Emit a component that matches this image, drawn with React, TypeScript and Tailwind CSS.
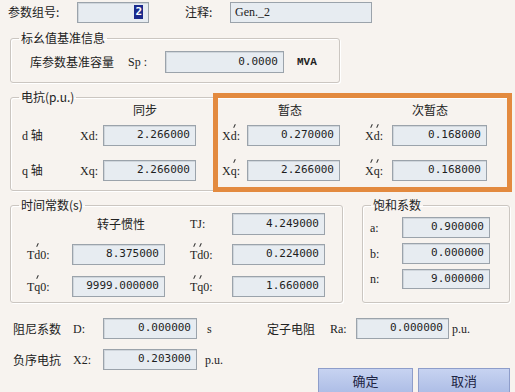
import type { ReactNode } from "react"

const cjk = "font-['Noto_Sans_CJK_SC',sans-serif]"
const lat = "font-['Liberation_Serif',serif] text-[12px]"
const mono = "font-['Liberation_Mono',monospace] text-[11px]"
const num = "font-['DejaVu_Sans_Mono',monospace] text-[11px]"

function Box({ className, children }: { className: string; children: ReactNode }) {
  return (
    <div
      className={`${className} flex items-center justify-end pr-[5px] bg-[#e7ecf1] border border-[#9ba3ab] shadow-[inset_1px_1px_0_#d0d6dc] ${num} text-[#1e1e1e]`}
    >
      {children}
    </div>
  )
}

function Group({ title, className, children }: { title: string; className: string; children: ReactNode }) {
  return (
    <fieldset className={`${className} border border-[#cbc6c1] rounded-[3px] shadow-[inset_1px_1px_0_#fff,1px_1px_0_#fff]`}>
      <legend className="ml-[8px] px-[2px] text-[12px] leading-[16px] text-[#222]">{title}</legend>
      {children}
    </fieldset>
  )
}

// letter with small prime strokes drawn above it
function Pr({ ch, n }: { ch: string; n: number }) {
  return (
    <span className="relative inline-block">
      {ch}
      <span className="absolute left-[3px] -top-[3px] w-[1px] h-[4px] bg-[#333] rotate-[25deg]" />
      {n === 2 && <span className="absolute -left-[3px] -top-[3px] w-[1px] h-[4px] bg-[#333] rotate-[25deg]" />}
    </span>
  )
}

export default function App() {
  return (
    <div className={`relative w-[515px] h-[392px] overflow-hidden bg-[#f7f3ef] text-[12px] text-[#222] ${cjk}`}>
      {/* top row */}
      <div className="flex items-center h-[24px] pl-[8px]">
        <span className="w-[69px]">参数组号:</span>
        <Box className="w-[72px] h-[21px]">
          <span className="bg-[#1b2a8c] text-white font-bold px-[1px] leading-[14px]">2</span>
        </Box>
        <span className="ml-[36px] w-[45px]">注释:</span>
        <div className={`w-[142px] h-[21px] flex items-center pl-[4px] bg-[#e7ecf1] border border-[#9ba3ab] ${lat}`}>
          Gen._2
        </div>
      </div>

      <Group title="标幺值基准信息" className="mt-[6px] ml-[10px] w-[330px] h-[53px]">
        <div className="flex items-center h-[22px] mt-[5px] pl-[19px]">
          <span className="w-[98px]">库参数基准容量</span>
          <span className={`w-[37px] ${lat}`}>Sp :</span>
          <Box className="w-[119px] h-[22px]">0.0000</Box>
          <span className={`ml-[13px] font-bold ${mono}`}>MVA</span>
        </div>
      </Group>

      <Group title="电抗(p.u.)" className="mt-[6px] ml-[10px] w-[500px] h-[102px]">
        <div className="flex h-[14px] leading-[14px] -mt-[2px]">
          <span className="ml-[122px] w-[26px]">同步</span>
          <span className="ml-[119px] w-[26px]">暂态</span>
          <span className="ml-[108px]">次暂态</span>
        </div>
        <div className="flex items-center h-[21px] mt-[8px] pl-[11px]">
          <span className="w-[58px]"><span className={lat}>d</span> 轴</span>
          <span className={`w-[23px] ${lat}`}>Xd:</span>
          <Box className="w-[93px] h-[21px]">2.266000</Box>
          <span className={`ml-[26px] w-[25px] ${lat}`}>X<Pr ch="d" n={1} />:</span>
          <Box className="w-[93px] h-[21px]">0.270000</Box>
          <span className={`ml-[25px] w-[27px] ${lat}`}>X<Pr ch="d" n={2} />:</span>
          <Box className="w-[95px] h-[21px]">0.168000</Box>
        </div>
        <div className="flex items-center h-[21px] mt-[14px] pl-[11px]">
          <span className="w-[58px]"><span className={lat}>q</span> 轴</span>
          <span className={`w-[23px] ${lat}`}>Xq:</span>
          <Box className="w-[93px] h-[21px]">2.266000</Box>
          <span className={`ml-[26px] w-[25px] ${lat}`}>X<Pr ch="q" n={1} />:</span>
          <Box className="w-[93px] h-[21px]">2.266000</Box>
          <span className={`ml-[25px] w-[27px] ${lat}`}>X<Pr ch="q" n={2} />:</span>
          <Box className="w-[95px] h-[21px]">0.168000</Box>
        </div>
      </Group>

      <div className="flex mt-[6px] ml-[10px]">
        <Group title="时间常数(s)" className="w-[333px] h-[106px]">
          <div className="flex items-center h-[22px] pl-[86px]">
            <span className="w-[93px]">转子惯性</span>
            <span className={`w-[42px] ${lat}`}>TJ:</span>
            <Box className="w-[93px] h-[22px]">4.249000</Box>
          </div>
          <div className="flex items-center h-[21px] mt-[9px] pl-[16px]">
            <span className={`w-[45px] ${lat}`}>T<Pr ch="d" n={1} />0:</span>
            <Box className="w-[93px] h-[21px]">8.375000</Box>
            <span className={`ml-[25px] w-[42px] ${lat}`}>T<Pr ch="d" n={2} />0:</span>
            <Box className="w-[93px] h-[21px]">0.224000</Box>
          </div>
          <div className="flex items-center h-[21px] mt-[11px] pl-[16px]">
            <span className={`w-[45px] ${lat}`}>T<Pr ch="q" n={1} />0:</span>
            <Box className="w-[93px] h-[21px]">9999.000000</Box>
            <span className={`ml-[25px] w-[42px] ${lat}`}>T<Pr ch="q" n={2} />0:</span>
            <Box className="w-[93px] h-[21px]">1.660000</Box>
          </div>
        </Group>

        <Group title="饱和系数" className="ml-[19px] w-[148px] h-[106px]">
          <div className="flex items-center h-[21px] mt-[4px] pl-[7px]">
            <span className={`w-[32px] ${lat}`}>a:</span>
            <Box className="w-[88px] h-[21px]">0.900000</Box>
          </div>
          <div className="flex items-center h-[21px] mt-[5px] pl-[7px]">
            <span className={`w-[32px] ${lat}`}>b:</span>
            <Box className="w-[88px] h-[21px]">0.000000</Box>
          </div>
          <div className="flex items-center h-[20px] mt-[5px] pl-[7px]">
            <span className={`w-[32px] ${lat}`}>n:</span>
            <Box className="w-[88px] h-[20px]">9.000000</Box>
          </div>
        </Group>
      </div>

      {/* bottom rows */}
      <div className="flex items-center h-[21px] mt-[15px] pl-[13px]">
        <span className="w-[60px]">阻尼系数</span>
        <span className={`w-[30px] ${lat}`}>D:</span>
        <Box className="w-[94px] h-[21px]">0.000000</Box>
        <span className={`w-[70px] pl-[10px] ${lat}`}>s</span>
        <span className="w-[63px]">定子电阻</span>
        <span className={`w-[26px] ${lat}`}>Ra:</span>
        <Box className="w-[93px] h-[21px]">0.000000</Box>
        <span className={`ml-[3px] ${lat}`}>p.u.</span>
      </div>
      <div className="flex items-start mt-[10px] pl-[13px]">
        <div className="flex items-center h-[21px]">
          <span className="w-[60px]">负序电抗</span>
          <span className={`w-[30px] ${lat}`}>X2:</span>
          <Box className="w-[94px] h-[21px]">0.203000</Box>
          <span className={`ml-[8px] ${lat}`}>p.u.</span>
        </div>
        <div className="ml-auto mr-[5px] mt-[19px] flex gap-[5px]">
          <button className="w-[95px] h-[26px] bg-gradient-to-b from-[#c7d3f1] to-[#adbde6] border border-[#8e9dca] text-[13px] text-[#1d2444]">
            确定
          </button>
          <button className="w-[92px] h-[26px] bg-gradient-to-b from-[#c7d3f1] to-[#adbde6] border border-[#8e9dca] text-[13px] text-[#1d2444]">
            取消
          </button>
        </div>
      </div>

      {/* highlight annotation */}
      <div className="absolute left-[213px] top-[93px] w-[299px] h-[99px] border-[5px] border-[#e38a3f]" />
    </div>
  )
}
